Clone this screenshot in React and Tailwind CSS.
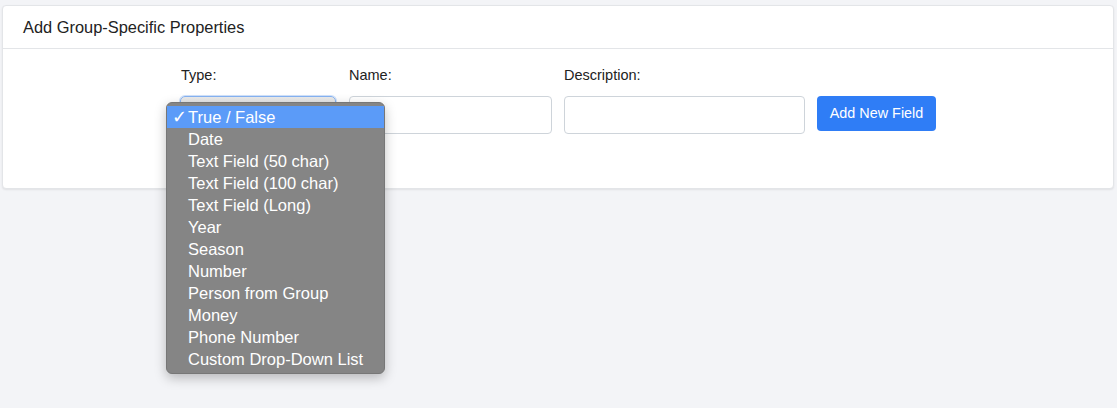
import React, { useState } from 'react';

const options = [
  'True / False',
  'Date',
  'Text Field (50 char)',
  'Text Field (100 char)',
  'Text Field (Long)',
  'Year',
  'Season',
  'Number',
  'Person from Group',
  'Money',
  'Phone Number',
  'Custom Drop-Down List',
];

const App = () => {
  const [selected] = useState(0);

  return (
    <div className="min-h-screen w-full bg-[#f3f4f7] pt-[5px] px-[2px] font-['Liberation_Sans',Arial,sans-serif] text-[#212529]">
      <div className="bg-white rounded-[4px] border border-[#e3e5e8] shadow-[0_1px_2px_rgba(0,0,0,0.08)] w-[1112px] h-[184px]">
        {/* Header */}
        <div className="h-[43px] border-b border-[#e3e5e8] pl-[20px] flex items-center">
          <h2 className="text-[16.4px] text-[#222]">Add Group-Specific Properties</h2>
        </div>

        {/* Form row */}
        <div className="flex justify-center pt-[16px]">
          <div className="flex items-start">
            {/* Type */}
            <div className="w-[156px] mr-[13px] relative">
              <label className="block text-[14.5px] leading-5 pl-[1px] mb-[11px] text-[#222]">Type:</label>
              <div className="h-[38px] rounded-[5px] border border-[#86b3f2] bg-gradient-to-b from-[#eaeaea] to-[#d9d9d9] shadow-[0_0_0_1px_rgba(120,170,240,0.35)]" />

              {/* Open dropdown menu */}
              <div className="absolute left-[-14px] top-[37px] w-[219px] rounded-[6px] bg-[#858585] py-[3px] shadow-[0_4px_12px_rgba(0,0,0,0.25)] border border-[#777] z-10">
                {options.map((opt, i) => (
                  <div
                    key={opt}
                    className={
                      'h-[22px] flex items-center text-[16.5px] text-white leading-none ' +
                      (i === selected ? 'bg-[#5b9bf8]' : '')
                    }
                  >
                    <span className="w-[21px] pl-[5px] text-[18px]">{i === selected ? '✓' : ''}</span>
                    <span>{opt}</span>
                  </div>
                ))}
              </div>
            </div>

            {/* Name */}
            <div className="w-[203px] mr-[12px]">
              <label className="block text-[14.5px] leading-5 mb-[11px] text-[#222]">Name:</label>
              <input
                type="text"
                className="w-full h-[38px] rounded-[4px] border border-[#ced4da] px-3 outline-none"
              />
            </div>

            {/* Description */}
            <div className="w-[241px] mr-[12px]">
              <label className="block text-[14.5px] leading-5 mb-[11px] text-[#222]">Description:</label>
              <input
                type="text"
                className="w-full h-[38px] rounded-[4px] border border-[#ced4da] px-3 outline-none"
              />
            </div>

            {/* Button */}
            <div className="pt-[31px]">
              <button className="h-[35px] w-[119px] rounded-[4px] bg-[#2f7df6] text-white text-[14.4px]">
                Add New Field
              </button>
            </div>
          </div>
        </div>
      </div>
    </div>
  );
};

export default App;
